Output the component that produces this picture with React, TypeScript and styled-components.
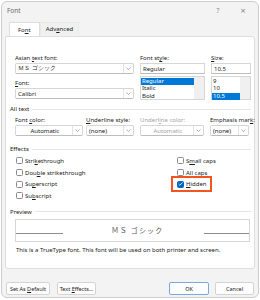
import React from "react";
import styled, { createGlobalStyle } from "styled-components";

const GlobalStyle = createGlobalStyle`
  html, body {
    margin: 0;
    padding: 0;
    background: #ffffff;
  }
  body {
    font-family: "Noto Sans", "Open Sans", sans-serif;
  }
  * {
    box-sizing: border-box;
  }
  u {
    text-decoration-thickness: 0.5px;
    text-underline-offset: 1px;
  }
`;

const Window = styled.div`
  width: 258px;
  height: 297px;
  margin: 1px;
  border: 1px solid #cdcdcd;
  border-radius: 6px;
  background: #f3f3f3;
  display: flex;
  flex-direction: column;
  font-size: 6px;
  color: #1b1b1b;
  overflow: hidden;
`;

const TitleBar = styled.div`
  height: 17px;
  display: flex;
  align-items: center;
  padding: 0 10px 0 5px;
  font-size: 6.5px;
  color: #6a6a6a;
`;

const Title = styled.span`
  flex: 1;
`;

const TitleButton = styled.span<{ $big?: boolean }>`
  width: 10px;
  margin-left: 15px;
  text-align: center;
  color: #8a8a8a;
  font-size: ${(p) => (p.$big ? "9px" : "6.5px")};
`;

const TabStrip = styled.div`
  display: flex;
  padding: 3px 0 0 4px;
  height: 17px;
  margin: 0 3px;
`;

const Tab = styled.div<{ $active?: boolean }>`
  height: ${(p) => (p.$active ? "14px" : "13px")};
  display: flex;
  align-items: center;
  padding: 0 ${(p) => (p.$active ? "8px" : "5px")};
  background: ${(p) => (p.$active ? "#ffffff" : "#f0f0f0")};
  border: 1px solid ${(p) => (p.$active ? "#dedede" : "#e8e8e8")};
  border-bottom: none;
  position: relative;
  z-index: 1;
  margin-bottom: -1px;
`;

const Panel = styled.div`
  margin: 0 3px;
  height: 233px;
  background: #ffffff;
  border: 1px solid #dedede;
  border-radius: 0 3px 3px 3px;
  padding: 17px 3px 0 4px;
  display: flex;
  flex-direction: column;
`;

const TopGrid = styled.div`
  display: grid;
  grid-template-columns: 119px 65px 40px;
  column-gap: 6px;
  padding-left: 5px;
`;

const Column = styled.div`
  display: flex;
  flex-direction: column;
`;

const Label = styled.div<{ $disabled?: boolean; $gap?: number }>`
  height: 8px;
  line-height: 8px;
  white-space: nowrap;
  margin-bottom: 1px;
  margin-top: ${(p) => p.$gap ?? 0}px;
  color: ${(p) => (p.$disabled ? "#a3a3a3" : "#1b1b1b")};
`;

const ComboBox = styled.div<{ $disabled?: boolean }>`
  height: 11px;
  display: flex;
  align-items: stretch;
  background: #ffffff;
  border: 1px solid #d6d6d6;
  border-bottom-color: #bdbdbd;
  border-radius: 2px;
  color: ${(p) => (p.$disabled ? "#a3a3a3" : "#1b1b1b")};
`;

const ComboText = styled.div<{ $center?: boolean }>`
  flex: 1;
  display: flex;
  align-items: center;
  justify-content: ${(p) => (p.$center ? "center" : "flex-start")};
  padding-left: 2px;
  white-space: nowrap;
  overflow: hidden;
`;

const ComboButton = styled.div`
  width: 10px;
  display: flex;
  align-items: center;
  justify-content: center;
  border-left: 1px solid #e3e3e3;
`;

const TextBox = styled.div`
  height: 11px;
  display: flex;
  align-items: center;
  padding-left: 2px;
  background: #ffffff;
  border: 1px solid #d6d6d6;
  border-bottom-color: #bdbdbd;
`;

const ListBox = styled.div`
  margin-top: 2px;
  height: 24px;
  display: flex;
  background: #ffffff;
  border: 1px solid #d6d6d6;
`;

const ListItems = styled.div`
  flex: 1;
  display: flex;
  flex-direction: column;
  padding-top: 0.5px;
`;

const ListItem = styled.div<{ $selected?: boolean }>`
  height: 7.5px;
  line-height: 7.5px;
  padding-left: 1px;
  background: ${(p) => (p.$selected ? "#0078d7" : "transparent")};
  color: ${(p) => (p.$selected ? "#ffffff" : "#1b1b1b")};
`;

const ScrollTrack = styled.div`
  width: 10px;
  background: #f0f0f0;
`;

const SectionHeader = styled.div<{ $gap: number }>`
  display: flex;
  align-items: center;
  height: 8px;
  margin-top: ${(p) => p.$gap}px;
  white-space: nowrap;
  &::after {
    content: "";
    flex: 1;
    height: 1px;
    margin-left: 3px;
    background: #e4e4e4;
  }
`;

const FieldRow = styled.div`
  display: flex;
  padding-left: 5px;
  margin-top: 3px;
`;

const Field = styled.div<{ $w: number; $gap: number }>`
  width: ${(p) => p.$w}px;
  margin-left: ${(p) => p.$gap}px;
  display: flex;
  flex-direction: column;
`;

const EffectsGrid = styled.div`
  display: grid;
  grid-template-columns: 161px 1fr;
  grid-auto-rows: 11.7px;
  padding-left: 6px;
  margin-top: 2px;
`;

const Check = styled.label<{ $col: number; $row: number }>`
  grid-column: ${(p) => p.$col};
  grid-row: ${(p) => p.$row};
  display: flex;
  align-items: center;
  white-space: nowrap;
`;

const Highlight = styled.span`
  display: inline-flex;
  align-items: center;
  padding: 2px 4px;
  margin: -4px -6px;
  border: 2px solid #f0561d;
`;

const Box = styled.span<{ $checked?: boolean }>`
  width: 7px;
  height: 7px;
  margin-right: 2px;
  border-radius: 1.5px;
  border: 1px solid ${(p) => (p.$checked ? "#0067c0" : "#8b8b8b")};
  background: ${(p) => (p.$checked ? "#0067c0" : "#ffffff")};
  display: inline-flex;
  align-items: center;
  justify-content: center;
`;

const PreviewBox = styled.div`
  margin: 3px 0 0 5px;
  width: 235px;
  height: 23px;
  border: 1px solid #d6d6d6;
  display: flex;
  align-items: center;
`;

const BaseLine = styled.span<{ $w: number }>`
  width: ${(p) => p.$w}px;
  height: 1px;
  margin-top: 6px;
  background: #8d8d8d;
`;

const PreviewText = styled.span`
  flex: 1;
  text-align: center;
  padding-left: 8px;
  font-family: "Noto Sans CJK JP", "Noto Sans", sans-serif;
  font-size: 7px;
  letter-spacing: 1.2px;
  color: #555555;
  white-space: nowrap;
`;

const Note = styled.div`
  margin: 4px 0 0 6px;
  height: 8px;
  line-height: 8px;
  white-space: nowrap;
`;

const Footer = styled.div`
  display: flex;
  padding: 13px 4px 0 4px;
`;

const Button = styled.div<{ $w: number; $gap?: number; $primary?: boolean }>`
  width: ${(p) => p.$w}px;
  height: 13px;
  margin-left: ${(p) => p.$gap ?? 0}px;
  display: flex;
  align-items: center;
  justify-content: center;
  background: #fdfdfd;
  border: 1px solid ${(p) => (p.$primary ? "#7aa7dc" : "#d3d3d3")};
  border-radius: 2px;
  font-size: 5.5px;
  white-space: nowrap;
`;

const Spacer = styled.div`
  flex: 1;
`;

const Chevron = () => (
  <svg width="5" height="3" viewBox="0 0 5 3">
    <polyline points="0.5,0.5 2.5,2.5 4.5,0.5" fill="none" stroke="#7a7a7a" strokeWidth="0.6" />
  </svg>
);

const Tick = () => (
  <svg width="5" height="4" viewBox="0 0 5 4">
    <polyline points="0.6,2 1.8,3.2 4.4,0.6" fill="none" stroke="#ffffff" strokeWidth="0.8" />
  </svg>
);

type ComboProps = {
  text: React.ReactNode;
  center?: boolean;
  disabled?: boolean;
};

const Combo = ({ text, center, disabled }: ComboProps) => (
  <ComboBox $disabled={disabled}>
    <ComboText $center={center}>{text}</ComboText>
    <ComboButton>
      <Chevron />
    </ComboButton>
  </ComboBox>
);

const App = () => {
  return (
    <>
      <GlobalStyle />
      <Window>
        <TitleBar>
          <Title>Font</Title>
          <TitleButton>?</TitleButton>
          <TitleButton $big>×</TitleButton>
        </TitleBar>
        <TabStrip>
          <Tab $active>
            <span>
              Fo<u>n</u>t
            </span>
          </Tab>
          <Tab>
            <span>
              Adv<u>a</u>nced
            </span>
          </Tab>
        </TabStrip>
        <Panel>
          <TopGrid>
            <Column>
              <Label>
                Asian <u>t</u>ext font:
              </Label>
              <Combo text="ＭＳ ゴシック" />
              <Label $gap={5}>
                <u>F</u>ont:
              </Label>
              <Combo text="Calibri" />
            </Column>
            <Column>
              <Label>
                Font st<u>y</u>le:
              </Label>
              <TextBox>Regular</TextBox>
              <ListBox>
                <ListItems>
                  <ListItem $selected>Regular</ListItem>
                  <ListItem>Italic</ListItem>
                  <ListItem>Bold</ListItem>
                </ListItems>
                <ScrollTrack />
              </ListBox>
            </Column>
            <Column>
              <Label>
                <u>S</u>ize:
              </Label>
              <TextBox>10.5</TextBox>
              <ListBox>
                <ListItems>
                  <ListItem>9</ListItem>
                  <ListItem>10</ListItem>
                  <ListItem $selected>10.5</ListItem>
                </ListItems>
                <ScrollTrack />
              </ListBox>
            </Column>
          </TopGrid>

          <SectionHeader $gap={5}>All text</SectionHeader>
          <FieldRow>
            <Field $w={68} $gap={0}>
              <Label>
                Font <u>c</u>olor:
              </Label>
              <Combo text="Automatic" center />
            </Field>
            <Field $w={48} $gap={3}>
              <Label>
                <u>U</u>nderline style:
              </Label>
              <Combo text="(none)" />
            </Field>
            <Field $w={64} $gap={6}>
              <Label $disabled>
                Underl<u>i</u>ne color:
              </Label>
              <Combo text="Automatic" center disabled />
            </Field>
            <Field $w={39} $gap={6}>
              <Label>
                Emphasis mar<u>k</u>:
              </Label>
              <Combo text="(none)" />
            </Field>
          </FieldRow>

          <SectionHeader $gap={9}>Effects</SectionHeader>
          <EffectsGrid>
            <Check $col={1} $row={1}>
              <Box />
              <span>
                Stri<u>k</u>ethrough
              </span>
            </Check>
            <Check $col={1} $row={2}>
              <Box />
              <span>
                Dou<u>b</u>le strikethrough
              </span>
            </Check>
            <Check $col={1} $row={3}>
              <Box />
              <span>
                Su<u>p</u>erscript
              </span>
            </Check>
            <Check $col={1} $row={4}>
              <Box />
              <span>
                Su<u>b</u>script
              </span>
            </Check>
            <Check $col={2} $row={1}>
              <Box />
              <span>
                S<u>m</u>all caps
              </span>
            </Check>
            <Check $col={2} $row={2}>
              <Box />
              <span>
                <u>A</u>ll caps
              </span>
            </Check>
            <Check $col={2} $row={3}>
              <Highlight>
                <Box $checked>
                  <Tick />
                </Box>
                <span>
                  <u>H</u>idden
                </span>
              </Highlight>
            </Check>
          </EffectsGrid>

          <SectionHeader $gap={6}>Preview</SectionHeader>
          <PreviewBox>
            <BaseLine $w={47} />
            <PreviewText>ＭＳ ゴシック</PreviewText>
            <BaseLine $w={45} />
          </PreviewBox>
          <Note>This is a TrueType font. This font will be used on both printer and screen.</Note>
        </Panel>
        <Footer>
          <Button $w={44}>
            <span>
              Set As <u>D</u>efault
            </span>
          </Button>
          <Button $w={39} $gap={7}>
            <span>
              Text <u>E</u>ffects...
            </span>
          </Button>
          <Spacer />
          <Button $w={40} $primary>
            OK
          </Button>
          <Button $w={39} $gap={6}>
            Cancel
          </Button>
        </Footer>
      </Window>
    </>
  );
};

export default App;
